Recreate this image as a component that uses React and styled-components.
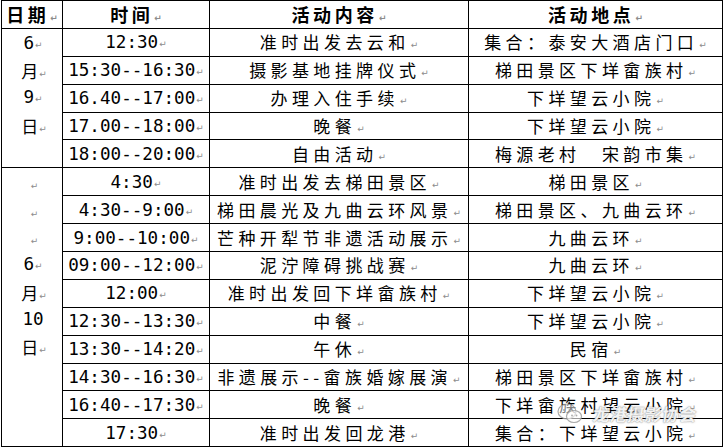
import styled, { createGlobalStyle } from "styled-components";

const GlobalStyle = createGlobalStyle`
  html, body {
    margin: 0;
    padding: 0;
    background: #fff;
  }
  body {
    font-family: "Noto Sans CJK SC", "Noto Sans", sans-serif;
    color: #000;
  }
`;

const day1 = [
  ["12:30", "准时出发去云和", "集合：泰安大酒店门口"],
  ["15:30--16:30", "摄影基地挂牌仪式", "梯田景区下垟畲族村"],
  ["16.40--17:00", "办理入住手续", "下垟望云小院"],
  ["17.00--18:00", "晚餐", "下垟望云小院"],
  ["18:00--20:00", "自由活动", "梅源老村　宋韵市集"],
];

const day2 = [
  ["4:30", "准时出发去梯田景区", "梯田景区"],
  ["4:30--9:00", "梯田晨光及九曲云环风景", "梯田景区、九曲云环"],
  ["9:00--10:00", "芒种开犁节非遗活动展示", "九曲云环"],
  ["09:00--12:00", "泥泞障碍挑战赛", "九曲云环"],
  ["12:00", "准时出发回下垟畲族村", "下垟望云小院"],
  ["12:30--13:30", "中餐", "下垟望云小院"],
  ["13:30--14:20", "午休", "民宿"],
  ["14:30--16:30", "非遗展示--畲族婚嫁展演", "梯田景区下垟畲族村"],
  ["16:40--17:30", "晚餐", "下垟畲族村望云小院"],
  ["17:30", "准时出发回龙港", "集合：下垟望云小院"],
];

const Page = styled.div`
  position: relative;
  width: 724px;
  height: 448px;
  overflow: hidden;
  padding-left: 1px;
  box-sizing: border-box;
`;

const Table = styled.table`
  border-collapse: collapse;
  table-layout: fixed;
  width: 721px;
`;

const Row = styled.tr`
  height: 27.9px;
`;

const Cell = styled.td`
  border: 1.6px solid #000;
  padding: 0 1px;
  text-align: center;
  vertical-align: middle;
  white-space: nowrap;
  overflow: hidden;
  line-height: 20px;
  font-size: ${(p) => (p.$mono ? "17.6px" : "17px")};
  font-family: ${(p) =>
    p.$mono
      ? '"DejaVu Sans Mono", "Liberation Mono", monospace'
      : '"Noto Sans CJK SC", "Noto Sans", sans-serif'};
  letter-spacing: ${(p) => (p.$mono ? "0" : "4.4px")};
`;

const HeadCell = styled(Cell)`
  font-weight: 700;
  font-size: 18px;
  letter-spacing: 3.6px;
`;

const DayCell = styled.td`
  border: 1.6px solid #000;
  padding: 1px 0 0;
  vertical-align: top;
  text-align: center;
`;

const DayLine = styled.div`
  height: 27.3px;
  line-height: 27.3px;
  text-align: center;
  font-size: ${(p) => (p.$mono ? "17.6px" : "17px")};
  font-family: ${(p) =>
    p.$mono
      ? '"DejaVu Sans Mono", "Liberation Mono", monospace'
      : '"Noto Sans CJK SC", "Noto Sans", sans-serif'};
  padding-left: ${(p) => (p.$mono ? "2px" : "4px")};
`;

const Mark = styled.span`
  display: inline-block;
  font-family: "DejaVu Sans", sans-serif;
  font-size: 9px;
  line-height: 0;
  letter-spacing: 0;
  color: #8c8c8c;
  margin-left: 1px;
  vertical-align: 1px;
`;

const Watermark = styled.div`
  position: absolute;
  left: 557px;
  top: 401px;
  display: flex;
  align-items: center;
  gap: 10px;
  pointer-events: none;
`;

const WatermarkText = styled.span`
  font-family: "Noto Sans CJK SC", sans-serif;
  font-weight: 700;
  font-size: 17px;
  letter-spacing: 0.3px;
  color: rgba(255, 255, 255, 0.92);
  text-shadow: 0 0 1px rgba(110, 110, 110, 0.8), 0 0 2px rgba(120, 120, 120, 0.5);
  transform: skewX(-8deg);
`;

function WeChatIcon() {
  return (
    <svg width="26" height="21" viewBox="0 0 26 21" fill="none">
      <ellipse cx="10" cy="8.5" rx="9" ry="7.5" stroke="rgba(150,150,150,0.8)" strokeWidth="1.2" fill="rgba(255,255,255,0.5)" />
      <ellipse cx="17" cy="13.5" rx="7.5" ry="6" stroke="rgba(150,150,150,0.8)" strokeWidth="1.2" fill="rgba(255,255,255,0.6)" />
      <circle cx="7" cy="7" r="1" fill="rgba(150,150,150,0.8)" />
      <circle cx="12.5" cy="7" r="1" fill="rgba(150,150,150,0.8)" />
      <circle cx="15" cy="12.5" r="0.9" fill="rgba(150,150,150,0.8)" />
      <circle cx="19.5" cy="12.5" r="0.9" fill="rgba(150,150,150,0.8)" />
    </svg>
  );
}

function DayColumn({ rows, lines }) {
  return (
    <DayCell rowSpan={rows}>
      {lines.map(([text, mark], i) => (
        <DayLine key={i} $mono={/\d/.test(text)}>
          {text}
          {mark && <Mark>↵</Mark>}
        </DayLine>
      ))}
    </DayCell>
  );
}

function ScheduleRows({ data, day }) {
  return data.map((r, i) => (
    <Row key={r[0] + i}>
      {i === 0 && day}
      <Cell $mono>
        {r[0]}
        <Mark>↵</Mark>
      </Cell>
      <Cell>
        {r[1]}
        <Mark>↵</Mark>
      </Cell>
      <Cell>
        {r[2]}
        <Mark>↵</Mark>
      </Cell>
    </Row>
  ));
}

export default function App() {
  return (
    <Page>
      <GlobalStyle />
      <Table>
        <colgroup>
          <col style={{ width: 61 }} />
          <col style={{ width: 147 }} />
          <col style={{ width: 259 }} />
          <col style={{ width: 254 }} />
        </colgroup>
        <tbody>
          <Row>
            <HeadCell>
              日期<Mark>↵</Mark>
            </HeadCell>
            <HeadCell>
              时间<Mark>↵</Mark>
            </HeadCell>
            <HeadCell>
              活动内容<Mark>↵</Mark>
            </HeadCell>
            <HeadCell>
              活动地点<Mark>↵</Mark>
            </HeadCell>
          </Row>
          <ScheduleRows
            data={day1}
            day={
              <DayColumn
                rows={5}
                lines={[
                  ["6", true],
                  ["月", true],
                  ["9", true],
                  ["日", true],
                ]}
              />
            }
          />
          <ScheduleRows
            data={day2}
            day={
              <DayColumn
                rows={10}
                lines={[
                  ["", true],
                  ["", true],
                  ["", true],
                  ["6", true],
                  ["月", true],
                  ["10", false],
                  ["日", true],
                ]}
              />
            }
          />
        </tbody>
      </Table>
      <Watermark>
        <WeChatIcon />
        <WatermarkText>龙港摄影协会</WatermarkText>
      </Watermark>
    </Page>
  );
}
